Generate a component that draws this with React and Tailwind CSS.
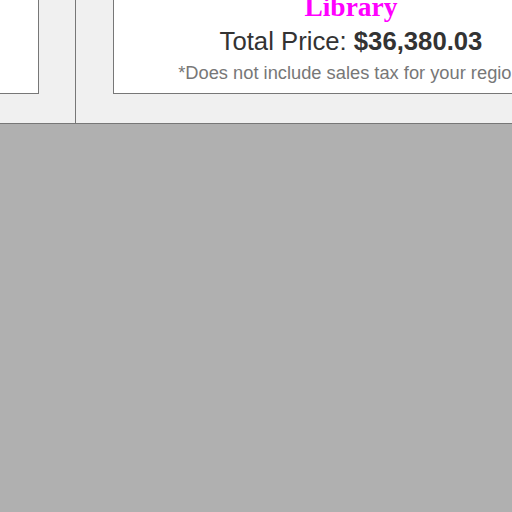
export default function App() {
  return (
    <div className="w-[512px] h-[512px] bg-[#b0b0b0] overflow-hidden" style={{ fontFamily: '"Liberation Sans", Arial, sans-serif' }}>
      <div className="h-[124px] bg-[#f0f0f0] border-b border-[#777] flex">
        <div className="w-[76px] shrink-0 border-r border-[#777]">
          <div className="w-[39px] h-[94px] bg-white border-r border-b border-[#777]" />
        </div>
        <div className="flex-1 min-w-0 overflow-hidden">
          <div className="ml-[37px] w-[475px] h-[94px] bg-white border-l border-b border-[#777] flex flex-col items-center overflow-hidden">
            <div className="mt-[-7px] text-[27.5px] leading-none font-bold text-[#ff00ff] whitespace-nowrap" style={{ fontFamily: '"Liberation Serif", "Times New Roman", serif' }}>
              Library
            </div>
            <div className="mt-[8px] text-[25.7px] leading-none text-[#333] whitespace-nowrap">
              Total Price: <span className="font-bold">$36,380.03</span>
            </div>
            <div className="mt-[10px] ml-[3px] text-[18.3px] leading-none text-[#777] whitespace-nowrap">
              *Does not include sales tax for your region.
            </div>
          </div>
        </div>
      </div>
    </div>
  );
}
